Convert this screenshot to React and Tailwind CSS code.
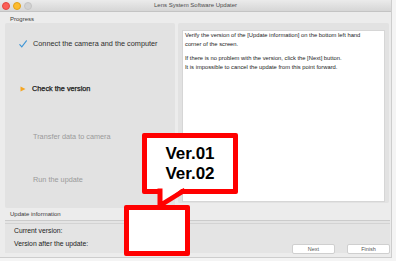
import React from "react";

export default function App() {
  const font = { fontFamily: '"Liberation Sans", Arial, sans-serif' };
  return (
    <div className="relative w-[396px] h-[261px] bg-[#f4f4f4] overflow-hidden" style={font}>
      <div className="w-[392px] h-[258px] bg-[#ececec] border-r border-b border-[#cdcdcd] flex flex-col">
        {/* Title bar */}
        <div className="relative h-[12px] shrink-0 bg-gradient-to-b from-[#ebebeb] to-[#d6d6d6] border-b border-[#c4c4c4] flex items-center">
          <div className="flex items-center gap-[3px] pl-[2px]">
            <span className="w-[8px] h-[8px] rounded-full bg-[#fc5f57] border border-[#e2463f]" />
            <span className="w-[8px] h-[8px] rounded-full bg-[#fdbc2e] border border-[#e1a116]" />
            <span className="w-[8px] h-[8px] rounded-full bg-[#d2d2d2] border border-[#c4c4c4]" />
          </div>
          <div className="absolute inset-0 flex items-center justify-center text-[6px] text-[#4c4c4c]">
            Lens System Software Updater
          </div>
        </div>

        {/* Progress label */}
        <div className="h-[11px] pl-[10px] flex items-center pt-[4px] text-[6px] text-[#3a3a3a]">Progress</div>

        {/* Main row */}
        <div className="flex gap-[3px] pl-[5px]">
          <div className="w-[170px] h-[185px] bg-[#e2e2e2] rounded-[2px] flex flex-col pt-[16px]">
            <div className="flex items-center h-[10px] pl-[14px] gap-[6px]">
              <svg width="8" height="8" viewBox="0 0 8 8">
                <path d="M0.8 4.6 L2.8 6.8 L7.4 0.8" fill="none" stroke="#3d95d6" strokeWidth="1.1" strokeLinecap="round" />
              </svg>
              <span className="text-[7.3px] text-[#2e2e2e]">Connect the camera and the computer</span>
            </div>
            <div className="flex items-center h-[10px] pl-[15px] gap-[6px] mt-[35px]">
              <svg width="6" height="6" viewBox="0 0 6 6">
                <path d="M0.5 0.5 L5.5 3 L0.5 5.5 Z" fill="#f5a623" />
              </svg>
              <span className="text-[7.3px] text-[#1a1a1a] [-webkit-text-stroke:0.25px_#1a1a1a]">Check the version</span>
            </div>
            <div className="flex items-center h-[10px] pl-[28px] mt-[38px]">
              <span className="text-[7.3px] text-[#9a9a9a]">Transfer data to camera</span>
            </div>
            <div className="flex items-center h-[10px] pl-[28px] mt-[33px]">
              <span className="text-[7.3px] text-[#9a9a9a]">Run the update</span>
            </div>
          </div>

          <div className="w-[211px] h-[180px] bg-[#e2e2e2] rounded-[2px] pt-[7px] px-[4px] pb-[1px]">
            <div className="h-full bg-white border border-[#d6d6d6] pl-[2px] text-[5.8px] leading-[8.5px] text-[#222]">
              <p>Verify the version of the [Update information] on the bottom left hand</p>
              <p>corner of the screen.</p>
              <p className="mt-[6px]">If there is no problem with the version, click the [Next] button.</p>
              <p>It is impossible to cancel the update from this point forward.</p>
            </div>
          </div>
        </div>

        {/* Update information label */}
        <div className="h-[12px] pl-[10px] flex items-center pt-[1px] text-[6px] text-[#3a3a3a]">Update information</div>

        {/* Update info box */}
        <div className="ml-[5px] mr-[1px] h-[33px] bg-[#e4e4e4] border-t border-[#cbcbcb] relative flex items-end justify-between">
          <div className="absolute left-0 right-0 top-[2px] h-px bg-[#d3d3d3]" />
          <div className="flex flex-col pl-[9px] pb-[5px] gap-[5px] text-[6.8px] text-[#222] leading-[8px]">
            <span>Current version:</span>
            <span>Version after the update:</span>
          </div>
          <div className="flex gap-[12px] mb-[-1px]">
            <button className="w-[43px] h-[10px] bg-white border border-[#cfcfcf] rounded-[2px] text-[5.5px] text-[#555] flex items-center justify-center">Next</button>
            <button className="w-[43px] h-[10px] bg-white border border-[#cfcfcf] rounded-[2px] text-[5.5px] text-[#555] flex items-center justify-center">Finish</button>
          </div>
        </div>
      </div>

      {/* Callout annotation */}
      <div className="absolute left-[142px] top-[133px] w-[96px] h-[61px] border-[5px] border-[#ff0000] bg-white rounded-[2px] flex flex-col items-center justify-center text-[17px] leading-[20px] font-bold text-black">
        <span>Ver.01</span>
        <span>Ver.02</span>
      </div>
      <svg className="absolute left-[150px] top-[186px]" width="45" height="24" viewBox="0 0 45 24">
        <polygon points="10,0 35,0 10,20" fill="white" />
        <path d="M10 2.5 L10 21 M35 4 L10 19.5" fill="none" stroke="#ff0000" strokeWidth="5" />
      </svg>
      <div className="absolute left-[124px] top-[205px] w-[66px] h-[51px] border-[5px] border-[#ff0000] bg-white rounded-[2px]" />
    </div>
  );
}
